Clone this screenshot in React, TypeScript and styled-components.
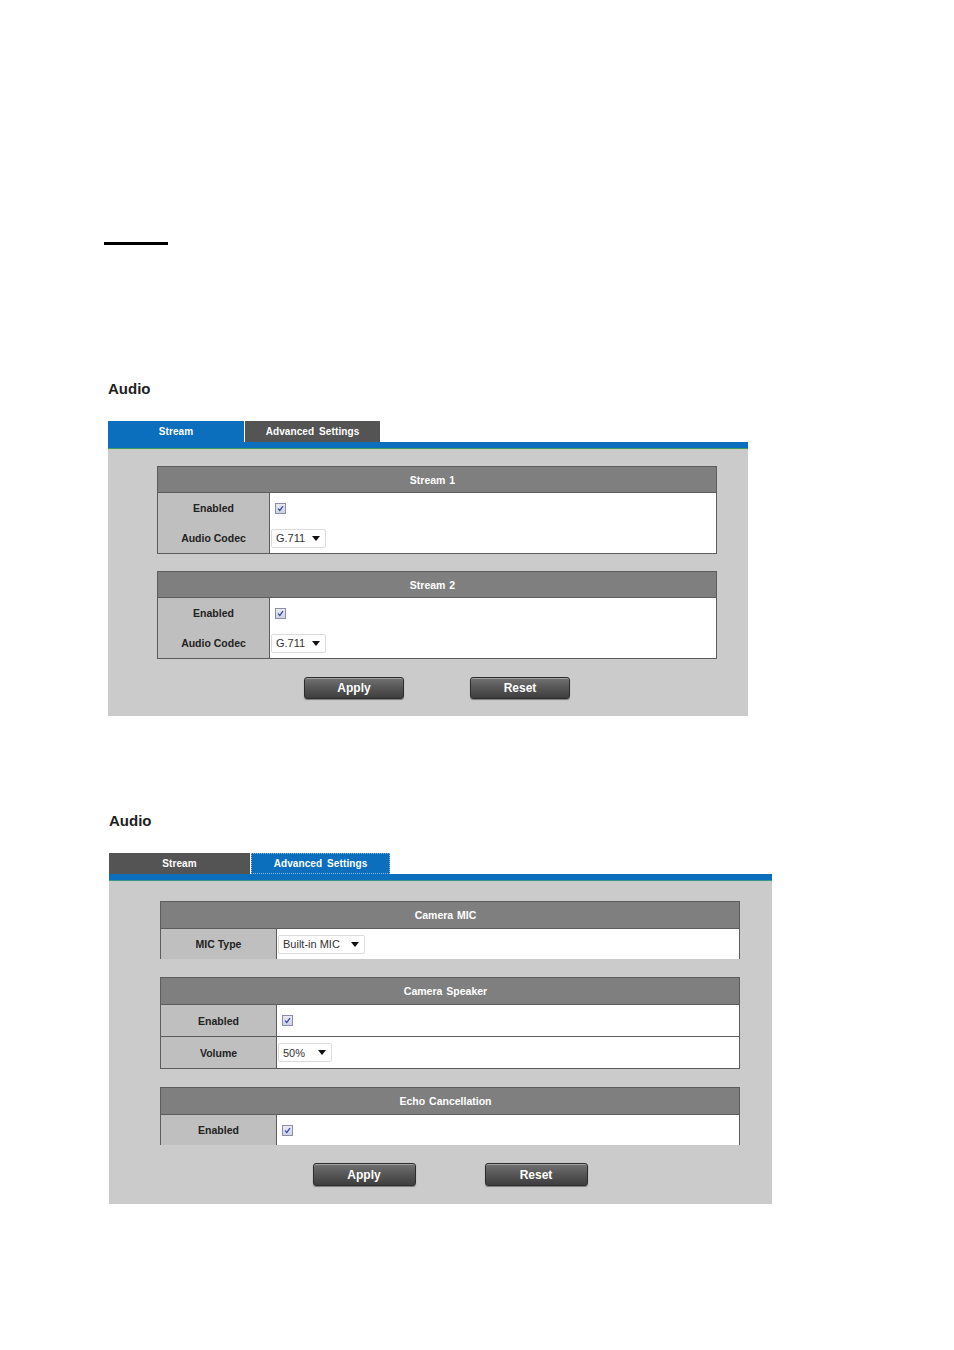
import React from 'react';
import styled, { createGlobalStyle } from 'styled-components';

const GlobalStyle = createGlobalStyle`
  html, body {
    margin: 0;
    padding: 0;
    background: #ffffff;
  }
  body {
    font-family: "Liberation Sans", Arial, sans-serif;
  }
`;

const Page = styled.div`
  width: 954px;
  height: 1350px;
  padding-top: 242px;
  box-sizing: border-box;
  overflow: hidden;
`;

const Rule = styled.div`
  margin-left: 104px;
  width: 64px;
  height: 3px;
  background: #000;
`;

const Section = styled.section<{ $left: number; $top: number; $width: number }>`
  margin-left: ${p => p.$left}px;
  margin-top: ${p => p.$top}px;
  width: ${p => p.$width}px;
`;

const Title = styled.h2`
  margin: 0;
  height: 18px;
  line-height: 18px;
  font-size: 15px;
  font-weight: bold;
  color: #1e1e1e;
`;

const TabBar = styled.div`
  display: flex;
  gap: 1px;
  margin-top: 23px;
  height: 21px;
`;

const Tab = styled.div<{ $active?: boolean; $width: number; $focus?: boolean }>`
  width: ${p => p.$width}px;
  height: 21px;
  box-sizing: border-box;
  display: flex;
  align-items: center;
  justify-content: center;
  background: ${p => (p.$active ? '#0b6fbe' : '#545454')};
  color: #fff;
  font-size: 10px;
  font-weight: bold;
  letter-spacing: 0.1px;
  word-spacing: 2px;
  outline: ${p => (p.$focus ? '1px dotted #8fb8d8' : 'none')};
  outline-offset: -1px;
`;

const BlueBar = styled.div<{ $line: string }>`
  height: 6px;
  background: #0b6fbe;
  border-bottom: 1px solid ${p => p.$line};
`;

const Body = styled.div<{ $padTop: number; $padLeft: number; $tableWidth: number; $gap: number; $padBottom: number }>`
  background: #cbcbcb;
  padding: ${p => p.$padTop}px 0 ${p => p.$padBottom}px ${p => p.$padLeft}px;
  display: flex;
  flex-direction: column;
  gap: ${p => p.$gap}px;
  & > * {
    width: ${p => p.$tableWidth}px;
  }
`;

const Table = styled.div<{ $open?: boolean }>`
  border: 1px solid #5c5c5c;
  border-bottom: ${p => (p.$open ? 'none' : '1px solid #5c5c5c')};
  box-sizing: border-box;
  background: #fff;
`;

const Header = styled.div<{ $h: number }>`
  height: ${p => p.$h}px;
  background: #7f7f7f;
  border-bottom: 1px solid #5c5c5c;
  color: #fff;
  font-size: 10.5px;
  font-weight: bold;
  display: flex;
  align-items: center;
  justify-content: center;
  padding-right: 9px;
  word-spacing: 1px;
`;

const Row = styled.div<{ $h: number; $divider?: boolean; $labelW: number }>`
  display: grid;
  grid-template-columns: ${p => p.$labelW}px 1fr;
  height: ${p => p.$h}px;
  border-top: ${p => (p.$divider ? '1px solid #5c5c5c' : 'none')};
`;

const Label = styled.div`
  background: #bfbfbf;
  border-right: 1px solid #5c5c5c;
  display: flex;
  align-items: center;
  justify-content: center;
  font-size: 10.5px;
  font-weight: bold;
  color: #222;
`;

const Value = styled.div`
  display: flex;
  align-items: center;
  padding-left: 1px;
`;

const Check = styled.span`
  width: 9px;
  height: 9px;
  margin-left: 4px;
  border: 1px solid #8b8ea8;
  background: linear-gradient(#e9eaf2, #cfd2e4);
  display: flex;
  align-items: center;
  justify-content: center;
`;

const SelectBox = styled.div<{ $width: number }>`
  width: ${p => p.$width}px;
  height: 19px;
  box-sizing: border-box;
  border: 1px solid #dcdcdc;
  border-radius: 2px;
  background: #fff;
  display: flex;
  align-items: center;
  justify-content: space-between;
  padding: 0 5px 0 4px;
  font-size: 11px;
  color: #333;
`;

const Arrow = styled.span`
  width: 0;
  height: 0;
  border-left: 4px solid transparent;
  border-right: 4px solid transparent;
  border-top: 5px solid #111;
`;

const ButtonRow = styled.div<{ $gap: number; $top: number }>`
  display: flex;
  justify-content: center;
  gap: ${p => p.$gap}px;
  margin-top: ${p => p.$top}px;
`;

const Button = styled.button<{ $w: number; $h: number }>`
  width: ${p => p.$w}px;
  height: ${p => p.$h}px;
  border: 1px solid #2c2c2c;
  border-radius: 3px;
  background: linear-gradient(#727272 0%, #585858 45%, #3e3e3e 100%);
  box-shadow: inset 0 1px 0 rgba(255, 255, 255, 0.35), 0 1px 1px rgba(0, 0, 0, 0.4);
  color: #fff;
  font-family: "Liberation Sans", Arial, sans-serif;
  font-size: 12px;
  font-weight: bold;
  padding: 0;
  cursor: pointer;
`;

const Checkbox = () => (
  <Check>
    <svg width="7" height="7" viewBox="0 0 7 7">
      <path d="M1 3.6 L2.8 5.4 L6 1.2" fill="none" stroke="#3b4aa8" strokeWidth="1.3" />
    </svg>
  </Check>
);

const Select = ({ value, width }: { value: string; width: number }) => (
  <SelectBox $width={width}>
    <span>{value}</span>
    <Arrow />
  </SelectBox>
);

type Field = { label: string; kind: 'check' | 'select'; value?: string; width?: number };

const SettingsTable = ({
  title,
  fields,
  headerH,
  rowH,
  labelW,
  divided,
  open
}: {
  title: string;
  fields: Field[];
  headerH: number;
  rowH: number;
  labelW: number;
  divided?: boolean;
  open?: boolean;
}) => (
  <Table $open={open}>
    <Header $h={headerH}>{title}</Header>
    {fields.map((f, i) => (
      <Row key={f.label} $h={rowH} $divider={divided && i > 0} $labelW={labelW}>
        <Label>{f.label}</Label>
        <Value>
          {f.kind === 'check' ? <Checkbox /> : <Select value={f.value || ''} width={f.width || 55} />}
        </Value>
      </Row>
    ))}
  </Table>
);

const streamFields: Field[] = [
  { label: 'Enabled', kind: 'check' },
  { label: 'Audio Codec', kind: 'select', value: 'G.711', width: 55 }
];

const App: React.FC = () => {
  return (
    <Page>
      <GlobalStyle />
      <Rule />

      <Section $left={108} $top={135} $width={640}>
        <Title>Audio</Title>
        <TabBar>
          <Tab $active $width={136}>Stream</Tab>
          <Tab $width={135}>Advanced Settings</Tab>
        </TabBar>
        <BlueBar $line="#3f9a5c" />
        <Body $padTop={17} $padLeft={49} $tableWidth={560} $gap={17} $padBottom={17}>
          <SettingsTable title="Stream 1" fields={streamFields} headerH={25} rowH={30} labelW={112} />
          <SettingsTable title="Stream 2" fields={streamFields} headerH={25} rowH={30} labelW={112} />
          <ButtonRow $gap={66} $top={1}>
            <Button $w={100} $h={22}>Apply</Button>
            <Button $w={100} $h={22}>Reset</Button>
          </ButtonRow>
        </Body>
      </Section>

      <Section $left={109} $top={96} $width={663}>
        <Title>Audio</Title>
        <TabBar>
          <Tab $width={141}>Stream</Tab>
          <Tab $active $focus $width={139}>Advanced Settings</Tab>
        </TabBar>
        <BlueBar $line="#3a9a8a" />
        <Body $padTop={20} $padLeft={51} $tableWidth={580} $gap={18} $padBottom={18}>
          <SettingsTable
            title="Camera MIC"
            fields={[{ label: 'MIC Type', kind: 'select', value: 'Built-in MIC', width: 87 }]}
            headerH={26}
            rowH={30}
            labelW={116}
            open
          />
          <SettingsTable
            title="Camera Speaker"
            fields={[
              { label: 'Enabled', kind: 'check' },
              { label: 'Volume', kind: 'select', value: '50%', width: 54 }
            ]}
            headerH={26}
            rowH={31}
            labelW={116}
            divided
          />
          <SettingsTable
            title="Echo Cancellation"
            fields={[{ label: 'Enabled', kind: 'check' }]}
            headerH={26}
            rowH={30}
            labelW={116}
            open
          />
          <ButtonRow $gap={69} $top={0}>
            <Button $w={103} $h={23}>Apply</Button>
            <Button $w={103} $h={23}>Reset</Button>
          </ButtonRow>
        </Body>
      </Section>
    </Page>
  );
};

export default App;
